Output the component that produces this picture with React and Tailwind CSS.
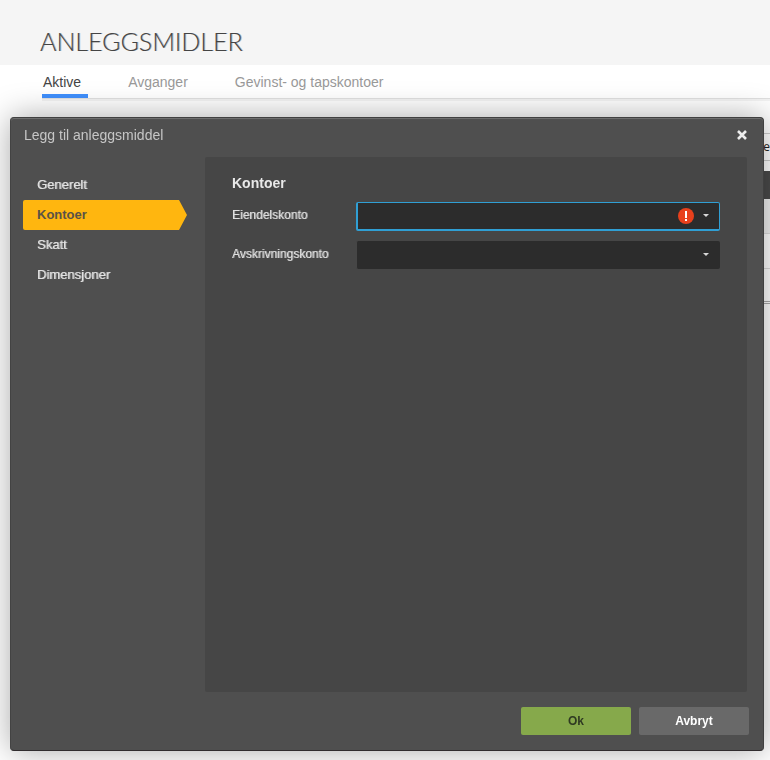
import React, { useState } from 'react';

const tabs = ['Aktive', 'Avganger', 'Gevinst- og tapskontoer'];
const sections = ['Generelt', 'Kontoer', 'Skatt', 'Dimensjoner'];

const AccountField = ({ id, label, invalid }) => (
  <div className="flex items-center">
    <label
      htmlFor={id}
      className="w-[124px] shrink-0 pb-[3px] text-[12px] leading-4 text-[#dedede] [text-shadow:1px_0_0_rgba(222,222,222,0.55)]"
    >
      {label}
    </label>
    <div className="relative flex-1">
      <select
        id={id}
        aria-invalid={invalid}
        className={`block w-full appearance-none rounded-[2px] bg-[#2c2c2c] pl-2 pr-14 text-[12px] text-[#dedede] outline-none ${
          invalid ? 'h-[29px] border border-b-2 border-l-2 border-[#309fd4]' : 'h-7 border-l border-[#464646]'
        }`}
      >
        <option value=""></option>
      </select>
      {invalid && (
        <svg className="pointer-events-none absolute right-[26px] top-[6px] h-4 w-4" viewBox="0 0 16 16">
          <circle cx="8" cy="8" r="8" fill="#e8401c" />
          <path d="M7 3h2v7H7zM7 11h2v2H7z" fill="#fff" />
        </svg>
      )}
      <svg className="pointer-events-none absolute right-[11px] top-3 h-[3px] w-[6px]" viewBox="0 0 6 3">
        <path d="M0 0h6L3 3z" fill="#d8d8d8" />
      </svg>
    </div>
  </div>
);

// Asset list, mostly hidden behind the dialog
const AssetList = () => (
  <div className="ml-[42px] mt-[34px]">
    <div className="flex h-7 items-center justify-end border-y border-[#ccc] bg-white">
      <span className="font-['Open_Sans',sans-serif] text-[12px] leading-4 text-[#222]">se</span>
    </div>
    <div className="mt-[10px] h-7 bg-[#4a4a4a]" />
    <div className="h-[35px] border-b border-[#ddd] bg-[#f0f0f0]" />
    <div className="h-[35px] border-b border-[#ddd]" />
    <div className="h-[35px] border-b-3 border-double border-[#aaa]" />
  </div>
);

const AssetDialog = () => {
  const [active, setActive] = useState('Kontoer');

  return (
    <div className="fixed inset-0 flex pb-[9px] pl-[10px] pr-[6px] pt-[117px]">
      <div
        role="dialog"
        aria-labelledby="dialog-title"
        className="flex flex-1 flex-col rounded-[4px] border border-b-[#302c2e] border-l-[#434343] border-r-[#404040] border-t-[#404040] bg-[#4f4f4f] pb-[15px] shadow-[inset_0_1px_0_#6e6e6e,0_0_32px_rgba(0,0,0,0.34)]"
      >
        <div className="flex h-[39px] shrink-0 items-center justify-between pb-[5px] pl-[13px] pr-[15px]">
          <h2 id="dialog-title" className="text-[14px] leading-5 text-[#c6c6c6]">
            Legg til anleggsmiddel
          </h2>
          <button type="button" aria-label="Lukk" className="h-3 w-3">
            <svg viewBox="0 0 12 12" className="block h-3 w-3">
              <path d="M2 2l8 8M10 2l-8 8" stroke="#eee" strokeWidth="2.6" />
            </svg>
          </button>
        </div>

        <div className="flex flex-1 pl-3 pr-4">
          <nav className="w-[164px] shrink-0 pt-[13px]">
            {sections.map((name) => (
              <button
                key={name}
                type="button"
                onClick={() => setActive(name)}
                className={`block h-[30px] w-full pl-[14px] text-left text-[13px] ${
                  active === name
                    ? 'rounded-l-[2px] bg-[#ffb60f] font-bold text-[#5a5247] [clip-path:polygon(0_0,156px_0,100%_50%,156px_100%,0_100%)]'
                    : 'text-[#e2e2e2] [text-shadow:1px_0_0_rgba(226,226,226,0.6)]'
                }`}
              >
                {name}
              </button>
            ))}
          </nav>

          <section className="ml-[18px] flex-1 rounded-[2px] bg-[#464646] pl-[27px] pr-[27px] pt-4">
            <h3 className="text-[14px] font-bold leading-5 text-[#e8e8e8]">Kontoer</h3>
            <div className="mt-[9px] flex flex-col gap-[10px]">
              <AccountField id="asset-account" label="Eiendelskonto" invalid />
              <AccountField id="depreciation-account" label="Avskrivningskonto" />
            </div>
          </section>
        </div>

        <div className="mt-[15px] flex shrink-0 justify-end gap-2 pr-[14px] text-[12px] font-bold">
          <button type="button" className="h-7 w-[110px] rounded-[2px] bg-[#86a94b] text-[#2f3a22]">
            Ok
          </button>
          <button type="button" className="h-7 w-[110px] rounded-[2px] bg-[#696969] text-white">
            Avbryt
          </button>
        </div>
      </div>
    </div>
  );
};

const App = () => (
  <div className="min-h-screen bg-white font-['Liberation_Sans',Arial,sans-serif]">
    <header className="h-[65px] bg-[#f5f5f5] pl-10 pt-[25px]">
      <h1 className="font-['Lato',sans-serif] text-[25px] font-light leading-8 text-[#444] [text-shadow:1px_0_0_rgba(68,68,68,0.35)]">
        ANLEGGSMIDLER
      </h1>
    </header>

    <nav className="ml-[42px] flex h-[34px] gap-[39px] border-b border-[#e0e0e0] text-[14px] shadow-[0_2px_0_#f3f3f3]">
      {tabs.map((tab, i) => (
        <a
          key={tab}
          href="#"
          className={`h-[33px] pl-px pr-[7px] pt-[7px] leading-5 ${
            i === 0 ? 'border-b-4 border-[#3f8ffc] text-[#444]' : 'text-[#999]'
          }`}
        >
          {tab}
        </a>
      ))}
    </nav>

    <AssetList />
    <AssetDialog />
  </div>
);

export default App;
